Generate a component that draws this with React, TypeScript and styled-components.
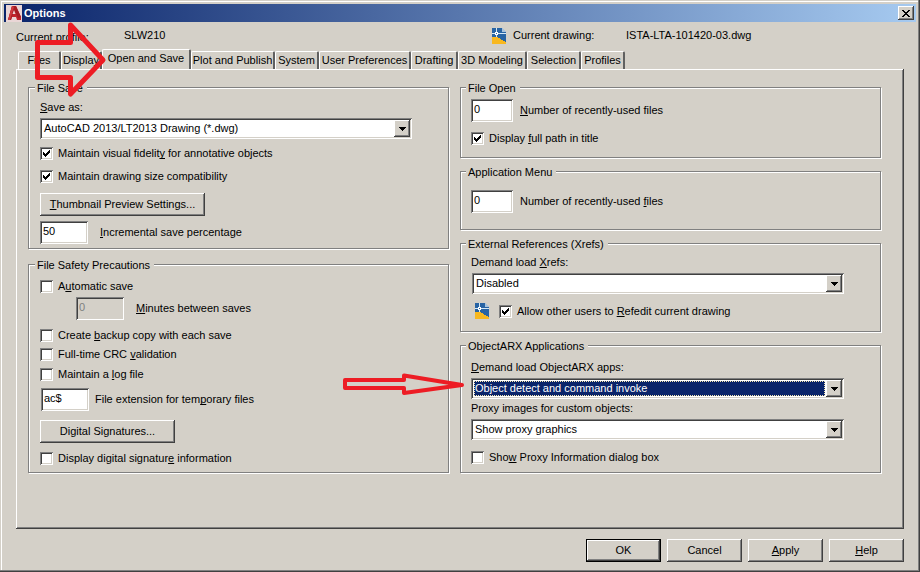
import React, { useId } from 'react';
import styled, { createGlobalStyle, css } from 'styled-components';

const face = '#d4d0c8';

const raised = css`
  box-shadow: inset -1px -1px #404040, inset 1px 1px #fff, inset -2px -2px #808080, inset 2px 2px ${face};
`;
const sunken = css`
  box-shadow: inset 1px 1px #808080, inset -1px -1px #fff, inset 2px 2px #404040, inset -2px -2px ${face};
`;

const GlobalStyle = createGlobalStyle`
  * { box-sizing: border-box; }
  body { margin: 0; background: ${face}; }
  body, button, input, select {
    font: 11px/13px 'Liberation Sans', Arial, sans-serif;
    color: #000;
  }
  u { text-underline-offset: 1px; text-decoration-skip-ink: none; }
`;

const Dialog = styled.main`
  position: relative;
  display: flex;
  flex-direction: column;
  min-height: 100vh;
  padding: 4px 4px 10px;
  background: ${face};
  box-shadow: inset -1px -1px #404040, inset -2px -2px #808080, inset 1px 1px ${face}, inset 2px 2px #fff;
`;

const TitleBar = styled.header`
  display: flex;
  align-items: center;
  gap: 2px;
  height: 18px;
  padding: 0 2px;
  background: linear-gradient(to right, #0a246a, #a6caf0);
`;

const Title = styled.h1`
  flex: 1;
  margin: 0;
  font-size: 11px;
  line-height: 13px;
  font-weight: bold;
  color: #fff;
`;

const CloseButton = styled.button`
  display: grid;
  place-items: center;
  width: 16px;
  height: 14px;
  padding: 0;
  border: 0;
  background: ${face};
  ${raised}
`;

const ProfileBar = styled.div`
  display: grid;
  grid-template-columns: 108px minmax(0, 1fr) 134px 278px;
  align-items: center;
  height: 27px;
  padding: 0 12px;
`;

const ProfileLabel = styled.span`
  padding-top: 4px;
`;

const DrawingLabel = styled.span`
  display: flex;
  align-items: center;
  gap: 7px;
`;

const TabList = styled.div`
  display: flex;
  align-items: flex-end;
  height: 20px;
  padding: 0 14px;
`;

const Tab = styled.button<{ $width: number; $active?: boolean }>`
  flex: 0 0 ${(p) => p.$width}px;
  height: ${(p) => (p.$active ? 20 : 18)}px;
  padding: 0 0 ${(p) => (p.$active ? 2 : 0)}px;
  border: solid;
  border-width: 1px 2px 0 1px;
  border-color: #fff #606060 #fff #fff;
  border-radius: 2px 2px 0 0;
  background: ${face};
  white-space: nowrap;
`;

const Panel = styled.section`
  flex: 1;
  display: grid;
  grid-template-columns: minmax(0, 1fr) minmax(0, 1fr);
  gap: 11px;
  align-items: start;
  margin: 0 12px;
  padding: 11px 23px 10px 12px;
  background: ${face};
  box-shadow: inset -1px -1px #404040, inset 1px 1px #fff, inset -2px -2px #808080;
`;

const Column = styled.div<{ $gap: number }>`
  display: flex;
  flex-direction: column;
  gap: ${(p) => p.$gap}px;
`;

const Group = styled.fieldset<{ $bottom: number; $left: number }>`
  min-width: 0;
  margin: 0;
  padding: 0 0 ${(p) => p.$bottom}px ${(p) => p.$left}px;
  border: 1px solid #808080;
  box-shadow: 1px 1px #fff, inset 1px 1px #fff;
`;

const Legend = styled.legend`
  margin-left: -5px;
  padding: 2px 4px 0 2px;
  background: ${face};
`;

const Row = styled.div<{ $top: number; $indent?: number; $gap?: number }>`
  position: relative;
  display: flex;
  align-items: center;
  gap: ${(p) => p.$gap ?? 5}px;
  margin-top: ${(p) => p.$top}px;
  padding-left: ${(p) => p.$indent ?? 0}px;
  white-space: nowrap;
`;

const FieldLabel = styled.label<{ $top: number }>`
  display: block;
  margin-top: ${(p) => p.$top}px;
`;

const ComboFrame = styled.div`
  flex: 1;
  display: grid;
  grid-template-columns: minmax(0, 1fr) 16px;
  height: 21px;
  margin-right: 36px;
  padding: 2px;
  background: #fff;
  ${sunken}
`;

const ComboSelect = styled.select<{ $focused?: boolean }>`
  grid-area: 1 / 1 / 2 / 3;
  appearance: none;
  min-width: 0;
  margin: 0;
  padding: 1px 17px 1px 1px;
  border: 0;
  outline: 0;
  border-radius: 0;
  text-indent: 1px;
  background: ${(p) => (p.$focused ? '#0a246a' : '#fff')} content-box;
  color: ${(p) => (p.$focused ? '#fff' : '#000')};
`;

const FocusRing = styled.span`
  grid-area: 1 / 1 / 2 / 2;
  margin: 1px;
  border: 1px dotted #f5e6b0;
  pointer-events: none;
`;

const ComboArrow = styled.span`
  grid-area: 1 / 2 / 2 / 3;
  display: grid;
  place-items: center;
  background: ${face};
  pointer-events: none;
  ${raised}
`;

const TextBox = styled.input<{ $width: number }>`
  width: ${(p) => p.$width}px;
  height: 23px;
  margin: 0;
  padding: 2px 3px 6px;
  border: 0;
  background: #fff;
  ${sunken}
  &:disabled {
    background: ${face};
    color: #808080;
  }
`;

const CheckBox = styled.span`
  display: grid;
  width: 13px;
  height: 13px;
`;

const CheckInput = styled.input`
  grid-area: 1 / 1;
  appearance: none;
  width: 13px;
  height: 13px;
  margin: 0;
  background: #fff;
  ${sunken}
  & + svg { visibility: hidden; }
  &:checked + svg { visibility: visible; }
`;

const CheckMark = styled.svg`
  grid-area: 1 / 1;
  pointer-events: none;
`;

const PushButton = styled.button<{ $width: number; $default?: boolean }>`
  width: ${(p) => p.$width}px;
  height: 23px;
  padding: 0;
  border: ${(p) => (p.$default ? '1px solid #000' : '0')};
  background: ${face};
  ${raised}
`;

const Footer = styled.footer`
  display: flex;
  justify-content: flex-end;
  gap: 6px;
  margin-top: 10px;
  padding: 0 12px;
`;

const TabPointer = styled.svg`
  position: absolute;
  left: 32px;
  top: 20px;
  pointer-events: none;
`;

const ComboPointer = styled.svg`
  position: absolute;
  left: -130px;
  top: -7px;
  pointer-events: none;
`;

const AppLogo = () => (
  <svg width="16" height="17" viewBox="0 0 16 17" aria-hidden="true">
    <rect width="16" height="17" fill="#ead6d6" />
    <path d="M2 15 6 1h4l5 11v3h-4l-1-3H6l-1 3z" fill="#c2242c" />
    <path d="M6 1h4l5 11-3 1L8 5 5 15H2z" fill="#a51c24" />
    <path d="M8 5 9.500 9H6.500z" fill="#ead6d6" />
    <path d="M2 15 6 1l2 1-4 13z" fill="#cf3a3e" />
  </svg>
);

const DrawingIcon = () => (
  <svg width="14" height="16" viewBox="0 0 14 16" shapeRendering="crispEdges" aria-hidden="true">
    <path d="M0 0h10l4 4v12H0z" fill="#2864a4" />
    <path d="M10 0v4h4z" fill="#a9c3dc" />
    <path d="M0 9h5l9 5v2H0z" fill="#f8b820" />
    <path d="M4 0h1v9H4zM0 5h14v1H0z" fill="#d5e8f6" />
    <path d="M3 4h3v3H3z" fill="#fff" />
    <path d="M4 5h1v1H4z" fill="#2864a4" />
  </svg>
);

function Combo({ id, value, focused }: { id: string; value: string; focused?: boolean }) {
  return (
    <ComboFrame>
      <ComboSelect id={id} defaultValue={value} $focused={focused}>
        <option>{value}</option>
      </ComboSelect>
      {focused && <FocusRing />}
      <ComboArrow>
        <svg width="7" height="4" viewBox="0 0 7 4" shapeRendering="crispEdges" aria-hidden="true">
          <path d="M0 0h7v1H6v1H5v1H4v1H3V3H2V2H1V1H0z" />
        </svg>
      </ComboArrow>
    </ComboFrame>
  );
}

function Check({ checked, children }: { checked?: boolean; children: React.ReactNode }) {
  const id = useId();
  return (
    <>
      <CheckBox>
        <CheckInput id={id} type="checkbox" defaultChecked={checked} />
        <CheckMark width="13" height="13" viewBox="0 0 13 13" shapeRendering="crispEdges" aria-hidden="true">
          <path d="M3 5h1v1h1v1h1V6h1V5h1V4h1V3h1v3H9v1H8v1H7v1H6v1H5V9H4V8H3z" />
        </CheckMark>
      </CheckBox>
      <label htmlFor={id}>{children}</label>
    </>
  );
}

const tabs: [string, number][] = [
  ['Files', 43],
  ['Display', 41],
  ['Open and Save', 89],
  ['Plot and Publish', 84],
  ['System', 44],
  ['User Preferences', 92],
  ['Drafting', 47],
  ['3D Modeling', 69],
  ['Selection', 54],
  ['Profiles', 44],
];

export default function App() {
  return (
    <>
      <GlobalStyle />
      <Dialog>
        <TitleBar>
          <AppLogo />
          <Title>Options</Title>
          <CloseButton aria-label="Close">
            <svg width="8" height="7" viewBox="0 0 8 7" shapeRendering="crispEdges" aria-hidden="true">
              <path d="M0 0h2v1h1v1h2V1h1V0h2v1H7v1H6v1H5v1h1v1h1v1h1v1H6V6H5V5H3v1H2v1H0V6h1V5h1V4h1V3H2V2H1V1H0z" />
            </svg>
          </CloseButton>
        </TitleBar>

        <ProfileBar>
          <ProfileLabel>Current profile:</ProfileLabel>
          <span>SLW210</span>
          <DrawingLabel>
            <DrawingIcon />
            Current drawing:
          </DrawingLabel>
          <span>ISTA-LTA-101420-03.dwg</span>
        </ProfileBar>

        <TabList role="tablist">
          {tabs.map(([name, width]) => (
            <Tab
              key={name}
              role="tab"
              aria-selected={name === 'Open and Save'}
              $width={width}
              $active={name === 'Open and Save'}
            >
              {name}
            </Tab>
          ))}
        </TabList>

        <Panel role="tabpanel">
          <Column $gap={8}>
            <Group $bottom={4} $left={11}>
              <Legend>File Save</Legend>
              <FieldLabel htmlFor="save-as" $top={6}><u>S</u>ave as:</FieldLabel>
              <Row $top={4}><Combo id="save-as" value="AutoCAD 2013/LT2013 Drawing (*.dwg)" /></Row>
              <Row $top={8}><Check checked>Maintain visual fidelit<u>y</u> for annotative objects</Check></Row>
              <Row $top={10}><Check checked>Maintain drawing size compatibility</Check></Row>
              <Row $top={10}><PushButton $width={165}><u>T</u>humbnail Preview Settings...</PushButton></Row>
              <Row $top={5} $gap={12}>
                <TextBox id="increment" $width={48} defaultValue="50" />
                <label htmlFor="increment"><u>I</u>ncremental save percentage</label>
              </Row>
            </Group>

            <Group $bottom={7} $left={11}>
              <Legend>File Safety Precautions</Legend>
              <Row $top={8}><Check>A<u>u</u>tomatic save</Check></Row>
              <Row $top={4} $indent={36} $gap={12}>
                <TextBox id="minutes" $width={48} defaultValue="0" disabled />
                <label htmlFor="minutes"><u>M</u>inutes between saves</label>
              </Row>
              <Row $top={9}><Check>Create <u>b</u>ackup copy with each save</Check></Row>
              <Row $top={6}><Check>Full-time CRC <u>v</u>alidation</Check></Row>
              <Row $top={7}><Check>Maintain a <u>l</u>og file</Check></Row>
              <Row $top={7} $indent={1} $gap={6}>
                <TextBox id="extension" $width={48} defaultValue="ac$" />
                <label htmlFor="extension">File extension for tem<u>p</u>orary files</label>
              </Row>
              <Row $top={9}><PushButton $width={135}>Digital Signatures...</PushButton></Row>
              <Row $top={9}><Check>Display digital signatur<u>e</u> information</Check></Row>
            </Group>
          </Column>

          <Column $gap={6}>
            <Group $bottom={12} $left={10}>
              <Legend>File Open</Legend>
              <Row $top={4} $gap={7}>
                <TextBox id="recent-files" $width={42} defaultValue="0" />
                <label htmlFor="recent-files"><u>N</u>umber of recently-used files</label>
              </Row>
              <Row $top={10}><Check checked>Display <u>f</u>ull path in title</Check></Row>
            </Group>

            <Group $bottom={16} $left={10}>
              <Legend>Application Menu</Legend>
              <Row $top={11} $gap={7}>
                <TextBox id="recent-menu" $width={42} defaultValue="0" />
                <label htmlFor="recent-menu">Number of recently-used <u>f</u>iles</label>
              </Row>
            </Group>

            <Group $bottom={12} $left={10}>
              <Legend>External References (Xrefs)</Legend>
              <FieldLabel htmlFor="xrefs" $top={5}>Demand load <u>X</u>refs:</FieldLabel>
              <Row $top={4} $indent={1}><Combo id="xrefs" value="Disabled" /></Row>
              <Row $top={9} $indent={4} $gap={10}>
                <DrawingIcon />
                <Row $top={0}><Check checked>Allow other users to <u>R</u>efedit current drawing</Check></Row>
              </Row>
            </Group>

            <Group $bottom={8} $left={10}>
              <Legend>ObjectARX Applications</Legend>
              <FieldLabel htmlFor="arx-apps" $top={8}><u>D</u>emand load ObjectARX apps:</FieldLabel>
              <Row $top={4}>
                <Combo id="arx-apps" value="Object detect and command invoke" focused />
                <ComboPointer width="126" height="28" viewBox="0 0 126 28" fill="none" stroke="#ed1c24" strokeWidth="4" strokeLinejoin="round" aria-hidden="true">
                  <path d="M4 9H63V4.500L121 14 63 22V17H4z" />
                </ComboPointer>
              </Row>
              <FieldLabel htmlFor="proxy-images" $top={3}>Proxy images for custom objects:</FieldLabel>
              <Row $top={4}><Combo id="proxy-images" value="Show proxy graphics" /></Row>
              <Row $top={11}><Check>Sho<u>w</u> Proxy Information dialog box</Check></Row>
            </Group>
          </Column>
        </Panel>

        <Footer>
          <PushButton $width={75} $default>OK</PushButton>
          <PushButton $width={75}>Cancel</PushButton>
          <PushButton $width={75}><u>A</u>pply</PushButton>
          <PushButton $width={75}><u>H</u>elp</PushButton>
        </Footer>

        <TabPointer width="76" height="80" viewBox="0 0 76 80" fill="none" stroke="#ed1c24" strokeWidth="5" strokeLinejoin="round" aria-hidden="true">
          <path d="M5.500 22.500H38.500V5L71 40 38.500 74V57.500H5.500z" />
        </TabPointer>
      </Dialog>
    </>
  );
}
